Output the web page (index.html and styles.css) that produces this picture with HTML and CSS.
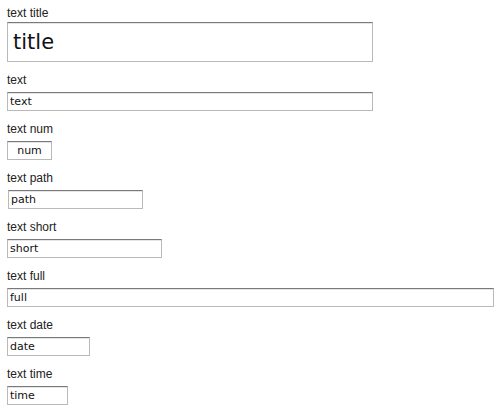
FILE: index.html
```html
<!DOCTYPE html>
<html>
<head>
<meta charset="utf-8">
<link rel="stylesheet" href="styles.css">
</head>
<body>
<form class="form">
  <div class="field field-title">
    <label class="label">text title</label>
    <input class="input input-title" type="text" value="title">
  </div>
  <div class="field">
    <label class="label">text</label>
    <input class="input input-text" type="text" value="text">
  </div>
  <div class="field">
    <label class="label">text num</label>
    <input class="input input-num" type="text" value="num">
  </div>
  <div class="field">
    <label class="label">text path</label>
    <input class="input input-path" type="text" value="path">
  </div>
  <div class="field">
    <label class="label">text short</label>
    <input class="input input-short" type="text" value="short">
  </div>
  <div class="field">
    <label class="label">text full</label>
    <input class="input input-full" type="text" value="full">
  </div>
  <div class="field">
    <label class="label">text date</label>
    <input class="input input-date" type="text" value="date">
  </div>
  <div class="field">
    <label class="label">text time</label>
    <input class="input input-time" type="text" value="time">
  </div>
</form>
</body>
</html>
```

FILE: styles.css
```css
html, body {
  margin: 0;
  padding: 0;
  background: #ffffff;
}
body {
  padding: 6px 7px 0 7px;
}
.form {
  display: flex;
  flex-direction: column;
  gap: 11px;
}
.field {
  display: flex;
  flex-direction: column;
  align-items: flex-start;
}
.label {
  display: block;
  font-family: "Liberation Sans", Arial, sans-serif;
  font-size: 12px;
  line-height: 15px;
  color: #222222;
  margin-bottom: 4px;
}
.field-title .label {
  margin-bottom: 1px;
}
.input {
  box-sizing: border-box;
  height: 19px;
  margin: 0;
  padding: 0 2px;
  border: 1px solid #b9b9b9;
  border-top-color: #7a7a7a;
  border-radius: 0;
  box-shadow: inset 0 1px 0 #e4e4e4;
  font-family: "DejaVu Sans", sans-serif;
  font-size: 11px;
  line-height: 17px;
  color: #111111;
  background: #ffffff;
  outline: none;
}
.input-title {
  width: 366px;
  height: 40px;
  padding: 0 5px;
  font-size: 21px;
  line-height: 38px;
}
.input-text { width: 366px; }
.input-num { width: 45px; text-align: center; }
.input-path { width: 135px; margin-left: 1px; }
.input-short { width: 155px; }
.input-full { width: 487px; }
.input-date { width: 83px; }
.input-time { width: 61px; }
```
